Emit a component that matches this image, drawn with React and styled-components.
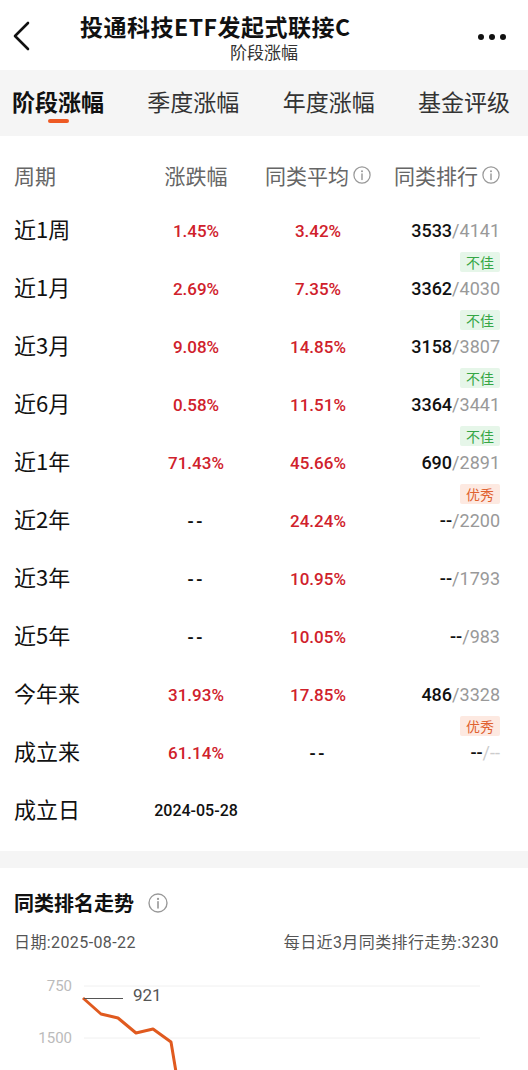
import React from "react";
import styled, { createGlobalStyle } from "styled-components";

const GlobalStyle = createGlobalStyle`
  body {
    margin: 0;
    background: #fff;
    font-family: "Noto Sans CJK SC", sans-serif;
    color: #111;
  }
`;

const numFont = `Roboto, "Noto Sans CJK SC", sans-serif`;

const Page = styled.div`
  width: 528px;
  background: #fff;
`;

const NavBar = styled.header`
  height: 70px;
  display: grid;
  grid-template-columns: 60px 1fr 60px;
`;

const NavTitle = styled.div`
  display: flex;
  flex-direction: column;
  align-items: center;
  padding-top: 13px;
`;

const Title = styled.h1`
  margin: 0;
  align-self: flex-start;
  padding-left: 20px;
  font-size: 23px;
  line-height: 27px;
  letter-spacing: 0.5px;
  font-weight: 700;
  color: #111;
  white-space: nowrap;
`;

const Subtitle = styled.div`
  margin-top: 2px;
  font-size: 17px;
  line-height: 20px;
  color: #333;
`;

const TabBar = styled.nav`
  height: 66px;
  box-sizing: border-box;
  background: #f5f5f5;
  display: flex;
  justify-content: space-between;
  padding: 16px 18px 0 12px;
`;

const Tab = styled.div`
  display: flex;
  flex-direction: column;
  align-items: center;
  font-size: 23px;
  line-height: 30px;
  color: ${(p) => (p.$active ? "#111" : "#333")};
  font-weight: ${(p) => (p.$active ? 700 : 400)};
`;

const Indicator = styled.span`
  width: 21px;
  height: 4px;
  border-radius: 2px;
  background: #ee5a24;
  margin-top: 3px;
`;

const Table = styled.section`
  padding: 19px 28px 0 14px;
`;

const GridRow = styled.div`
  display: grid;
  grid-template-columns: 120px 124px 120px 1fr;
`;

const HeadRow = styled(GridRow)`
  height: 40px;
  align-items: center;
  color: #666;
  font-size: 21px;
  margin-bottom: 18px;
`;

const HeadCell = styled.div`
  display: flex;
  align-items: center;
  gap: 4px;
  justify-content: ${(p) => p.$align || "flex-start"};
`;

const Row = styled(GridRow)`
  height: 58px;
  align-items: start;
`;

const Label = styled.div`
  font-size: 22px;
  line-height: 30px;
  color: #111;
`;

const Num = styled.div`
  text-align: center;
  font-family: ${numFont};
  font-size: ${(p) => (p.$small ? "16px" : "17px")};
  line-height: 30px;
  margin-top: 3px;
  font-weight: ${(p) => (p.$dash ? 700 : 500)};
  letter-spacing: ${(p) => (p.$dash ? "2px" : "0")};
  color: ${(p) => (p.$up ? "#d0212b" : "#111")};
`;

const RankCell = styled.div`
  display: flex;
  flex-direction: column;
  align-items: flex-end;
  margin-top: 3px;
`;

const RankValue = styled.div`
  font-family: ${numFont};
  font-size: 18px;
  line-height: 30px;
  color: ${(p) => (p.$empty ? "#ccc" : "#999")};

  strong {
    color: #111;
    font-weight: 500;
  }
`;

const Tag = styled.span`
  margin-top: 6px;
  height: 20px;
  line-height: 20px;
  padding: 0 6px;
  font-size: 14px;
  border-radius: 2px;
  color: ${(p) => (p.$good ? "#e0612f" : "#35a645")};
  background: ${(p) => (p.$good ? "#fde9e1" : "#e6f6e9")};
`;

const Divider = styled.div`
  height: 17px;
  background: #f5f5f5;
`;

const ChartSection = styled.section`
  padding: 21px 29px 0 14px;
`;

const SectionTitle = styled.h2`
  margin: 0;
  display: flex;
  align-items: center;
  gap: 14px;
  font-size: 20px;
  line-height: 28px;
  font-weight: 700;
  color: #111;
`;

const MetaRow = styled.div`
  display: flex;
  justify-content: space-between;
  margin-top: 15px;
  font-size: 16px;
  line-height: 22px;
  letter-spacing: 0.4px;
  color: #555;
  font-family: ${numFont};
`;

const ChartBox = styled.div`
  margin-top: 12px;
  height: 260px;
`;

function InfoIcon({ size = 18 }) {
  return (
    <svg width={size} height={size} viewBox="0 0 16 16" fill="none">
      <circle cx="8" cy="8" r="7.2" stroke="#999" strokeWidth="1.1" />
      <circle cx="8" cy="4.7" r="0.9" fill="#999" />
      <path d="M8 7v5" stroke="#999" strokeWidth="1.3" strokeLinecap="round" />
    </svg>
  );
}

const rows = [
  { label: "近1周", chg: "1.45%", avg: "3.42%", rank: "3533", total: "4141", tag: "不佳" },
  { label: "近1月", chg: "2.69%", avg: "7.35%", rank: "3362", total: "4030", tag: "不佳" },
  { label: "近3月", chg: "9.08%", avg: "14.85%", rank: "3158", total: "3807", tag: "不佳" },
  { label: "近6月", chg: "0.58%", avg: "11.51%", rank: "3364", total: "3441", tag: "不佳" },
  { label: "近1年", chg: "71.43%", avg: "45.66%", rank: "690", total: "2891", tag: "优秀" },
  { label: "近2年", chg: "--", avg: "24.24%", rank: "--", total: "2200" },
  { label: "近3年", chg: "--", avg: "10.95%", rank: "--", total: "1793" },
  { label: "近5年", chg: "--", avg: "10.05%", rank: "--", total: "983" },
  { label: "今年来", chg: "31.93%", avg: "17.85%", rank: "486", total: "3328", tag: "优秀" },
  { label: "成立来", chg: "61.14%", avg: "--", rank: "--", total: "--" },
];

const tabs = ["阶段涨幅", "季度涨幅", "年度涨幅", "基金评级"];

const points = [
  [83, 32], [101, 48], [118, 52], [136, 67], [153, 63], [171, 76],
  [177, 112], [194, 140], [212, 150], [230, 166], [248, 158], [266, 176],
  [284, 190], [302, 184], [320, 200], [338, 214], [356, 208], [374, 222],
  [392, 230], [410, 226], [428, 238], [446, 240], [464, 246], [480, 244],
];

function RankChart() {
  const labels = ["750", "1500", "2250", "3000", "3750"];
  return (
    <svg width="528" height="260" viewBox="0 0 528 260">
      {labels.map((t, i) => (
        <g key={t}>
          <line x1="84" x2="480" y1={20 + i * 52} y2={20 + i * 52} stroke="#f0f0f0" strokeWidth="1" />
          <text x="72" y={25 + i * 52} textAnchor="end" fontSize="15" fill="#bbb" fontFamily="Roboto, sans-serif">
            {t}
          </text>
        </g>
      ))}
      <polyline
        points={points.map((p) => p.join(",")).join(" ")}
        fill="none"
        stroke="#e05a1f"
        strokeWidth="3"
        strokeLinejoin="round"
      />
      <line x1="84" x2="123" y1="32.5" y2="32.5" stroke="#555" strokeWidth="1.2" />
      <text x="133" y="35" fontSize="17" fill="#555" fontFamily="Roboto, sans-serif">
        921
      </text>
    </svg>
  );
}

export default function App() {
  return (
    <Page>
      <GlobalStyle />
      <NavBar>
        <svg width="60" height="70" viewBox="0 0 60 70">
          <path d="M28 23 L15 36 L28 49" fill="none" stroke="#111" strokeWidth="2.6" strokeLinecap="round" strokeLinejoin="round" />
        </svg>
        <NavTitle>
          <Title>投通科技ETF发起式联接C</Title>
          <Subtitle>阶段涨幅</Subtitle>
        </NavTitle>
        <svg width="60" height="70" viewBox="0 0 60 70">
          <circle cx="13" cy="37" r="3" fill="#111" />
          <circle cx="24" cy="37" r="3" fill="#111" />
          <circle cx="35" cy="37" r="3" fill="#111" />
        </svg>
      </NavBar>

      <TabBar>
        {tabs.map((t, i) => (
          <Tab key={t} $active={i === 0}>
            {t}
            {i === 0 && <Indicator />}
          </Tab>
        ))}
      </TabBar>

      <Table>
        <HeadRow>
          <HeadCell>周期</HeadCell>
          <HeadCell $align="center">涨跌幅</HeadCell>
          <HeadCell $align="center">
            同类平均
            <InfoIcon />
          </HeadCell>
          <HeadCell $align="flex-end">
            同类排行
            <InfoIcon />
          </HeadCell>
        </HeadRow>

        {rows.map((r) => (
          <Row key={r.label}>
            <Label>{r.label}</Label>
            <Num $up={r.chg !== "--"} $dash={r.chg === "--"}>{r.chg}</Num>
            <Num $up={r.avg !== "--"} $dash={r.avg === "--"}>{r.avg}</Num>
            <RankCell>
              <RankValue $empty={r.total === "--"}>
                <strong>{r.rank}</strong>/{r.total}
              </RankValue>
              {r.tag && <Tag $good={r.tag === "优秀"}>{r.tag}</Tag>}
            </RankCell>
          </Row>
        ))}
        <Row>
          <Label>成立日</Label>
          <Num $small>2024-05-28</Num>
        </Row>
      </Table>

      <Divider />

      <ChartSection>
        <SectionTitle>
          同类排名走势
          <InfoIcon size={20} />
        </SectionTitle>
        <MetaRow>
          <span>日期:2025-08-22</span>
          <span>每日近3月同类排行走势:3230</span>
        </MetaRow>
      </ChartSection>
      <ChartBox>
        <RankChart />
      </ChartBox>
    </Page>
  );
}
